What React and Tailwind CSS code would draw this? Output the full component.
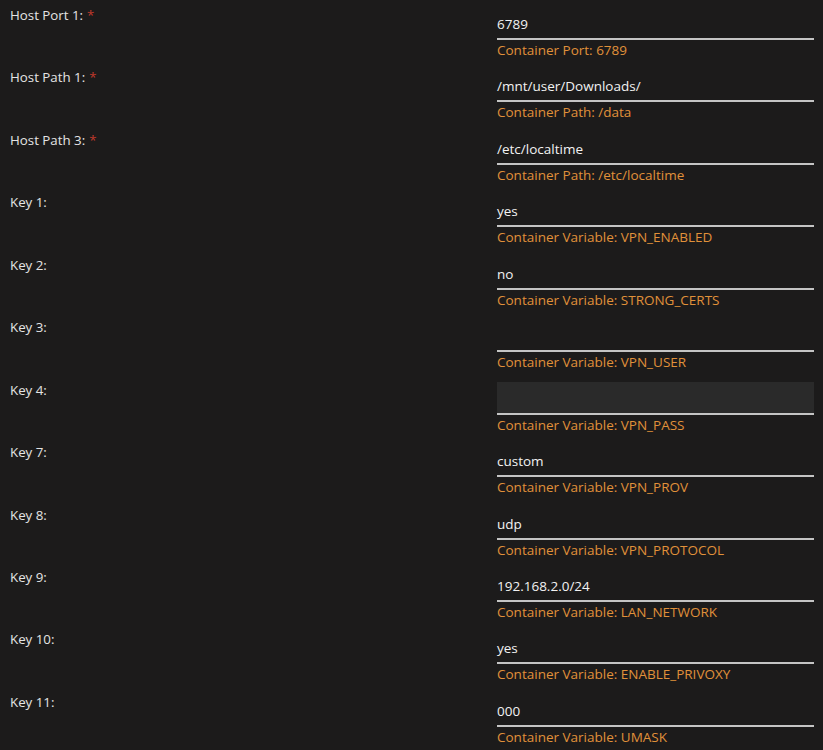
import React from 'react';

const rows = [
  { label: 'Host Port 1:', required: true, value: '6789', help: 'Container Port: 6789' },
  { label: 'Host Path 1:', required: true, value: '/mnt/user/Downloads/', help: 'Container Path: /data' },
  { label: 'Host Path 3:', required: true, value: '/etc/localtime', help: 'Container Path: /etc/localtime' },
  { label: 'Key 1:', value: 'yes', help: 'Container Variable: VPN_ENABLED' },
  { label: 'Key 2:', value: 'no', help: 'Container Variable: STRONG_CERTS' },
  { label: 'Key 3:', value: '', help: 'Container Variable: VPN_USER' },
  { label: 'Key 4:', value: '', help: 'Container Variable: VPN_PASS', filled: true },
  { label: 'Key 7:', value: 'custom', help: 'Container Variable: VPN_PROV' },
  { label: 'Key 8:', value: 'udp', help: 'Container Variable: VPN_PROTOCOL' },
  { label: 'Key 9:', value: '192.168.2.0/24', help: 'Container Variable: LAN_NETWORK' },
  { label: 'Key 10:', value: 'yes', help: 'Container Variable: ENABLE_PRIVOXY' },
  { label: 'Key 11:', value: '000', help: 'Container Variable: UMASK' },
];

const FieldRow = ({ row }) => (
  <div className="flex h-[62.45px]">
    <div className="w-[497px] shrink-0 pl-[10px] pt-[7px] text-[13.3px] leading-[16px] text-[#e4e4e4]">
      {row.label}
      {row.required && <span className="ml-[4px] text-[#c0392b]">*</span>}
    </div>
    <div className="w-[317px] shrink-0">
      <div
        className={
          'mt-[7px] h-[33px] border-b-2 border-[#c4c4c4] pb-[6px] pt-[9px] text-[13.5px] leading-[16px] text-[#f2f2f2] ' +
          (row.filled ? 'bg-[#2a2a2a]' : '')
        }
      >
        {row.value}
      </div>
      <div className="pt-[2px] text-[13.5px] leading-[16px] text-[#e0913a]">{row.help}</div>
    </div>
  </div>
);

export default function App() {
  return (
    <div
      className="min-h-[750px] w-full bg-[#1c1b1b]"
      style={{ fontFamily: '"Open Sans", "Noto Sans", sans-serif' }}
    >
      {rows.map((row) => (
        <FieldRow key={row.label} row={row} />
      ))}
    </div>
  );
}
